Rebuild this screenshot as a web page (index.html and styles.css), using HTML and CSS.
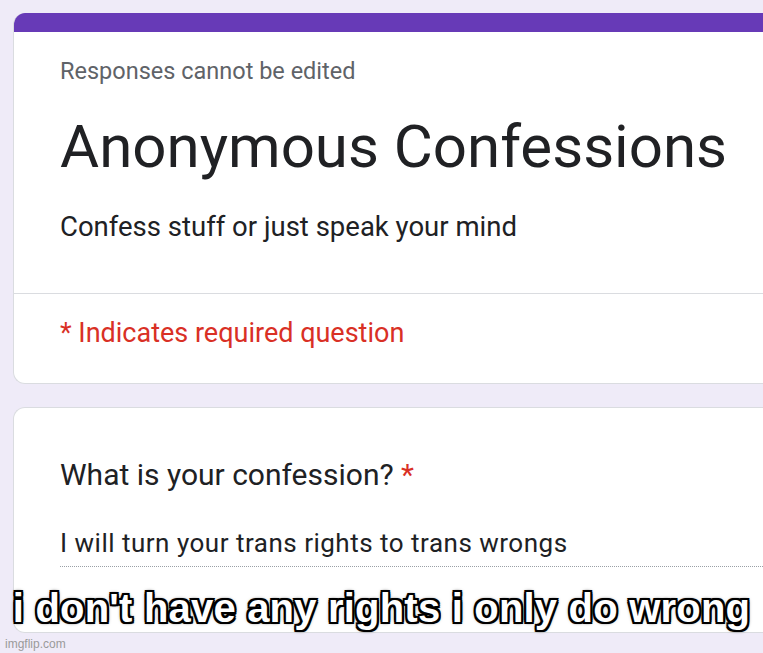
FILE: index.html
```html
<!DOCTYPE html>
<html lang="en">
<head>
<meta charset="utf-8">
<title>Anonymous Confessions</title>
<link rel="stylesheet" href="styles.css">
</head>
<body>
<main class="page">
  <section class="card card-header">
    <div class="accent"></div>
    <div class="header-body">
      <p class="notice">Responses cannot be edited</p>
      <h1 class="title">Anonymous Confessions</h1>
      <p class="subtitle">Confess stuff or just speak your mind</p>
    </div>
    <div class="required-row">
      <p class="required">* Indicates required question</p>
    </div>
  </section>
  <section class="card card-question">
    <h2 class="question">What is your confession? <span class="star">*</span></h2>
    <div class="answer">I will turn your trans rights to trans wrongs</div>
  </section>
</main>
<div class="caption"><span class="caption-text">i don't have any rights i only do wrong</span></div>
<div class="watermark">imgflip.com</div>
</body>
</html>
```
FILE: styles.css
```css
html, body {
  margin: 0;
  padding: 0;
  overflow: hidden;
  height: 653px;
}
body {
  background: #efebf8;
  font-family: Roboto, "Noto Sans", Arial, sans-serif;
  color: #202124;
  position: relative;
}
.page {
  padding-top: 13px;
}
.card {
  margin-left: 13px;
  margin-right: -40px;
  background: #fff;
  border: 1px solid #dadce0;
  border-right: none;
  border-radius: 12px 0 0 12px;
  overflow: hidden;
}
.card-header {
  border-top: none;
}
.accent {
  height: 19px;
  background: #673ab7;
}
.header-body {
  padding: 25px 0 50px 46px;
  border-bottom: 1px solid #dadce0;
}
.notice {
  margin: 0;
  font-size: 23.5px;
  line-height: 28px;
  color: #5f6368;
}
.title {
  margin: 26px 0 0;
  font-size: 60px;
  line-height: 72px;
  font-weight: 400;
  color: #202124;
}
.subtitle {
  margin: 28px 0 0;
  font-size: 27.5px;
  line-height: 32px;
  color: #202124;
}
.required-row {
  padding: 23px 0 34px 46px;
}
.required {
  margin: 0;
  font-size: 27px;
  line-height: 32px;
  color: #d93025;
}
.card-question {
  margin-top: 23px;
  padding: 49px 0 65px 46px;
}
.question {
  margin: 0;
  font-size: 30px;
  line-height: 36px;
  font-weight: 400;
  color: #202124;
}
.star {
  color: #d93025;
}
.answer {
  margin-top: 34px;
  font-size: 26px;
  line-height: 32px;
  letter-spacing: 0.5px;
  padding-bottom: 7px;
  border-bottom: 1px dotted #9aa0a6;
  color: #202124;
}
.caption {
  position: absolute;
  left: 0;
  right: 0;
  top: 584px;
  text-align: center;
  white-space: nowrap;
}
.caption-text {
  display: inline-block;
  font-family: "Liberation Sans", Arial, sans-serif;
  font-weight: 700;
  font-size: 40px;
  line-height: 48px;
  letter-spacing: 0.2px;
  color: #fff;
  text-shadow:
    2px 0 0 #000, -2px 0 0 #000, 0 2px 0 #000, 0 -2px 0 #000,
    2px 2px 0 #000, -2px -2px 0 #000, 2px -2px 0 #000, -2px 2px 0 #000,
    0 0 4px #000, 0 0 3px #000;
}
.watermark {
  position: absolute;
  left: 5px;
  top: 637px;
  font-family: "Liberation Sans", Arial, sans-serif;
  font-size: 12px;
  line-height: 14px;
  color: #9a9a9a;
}
```
